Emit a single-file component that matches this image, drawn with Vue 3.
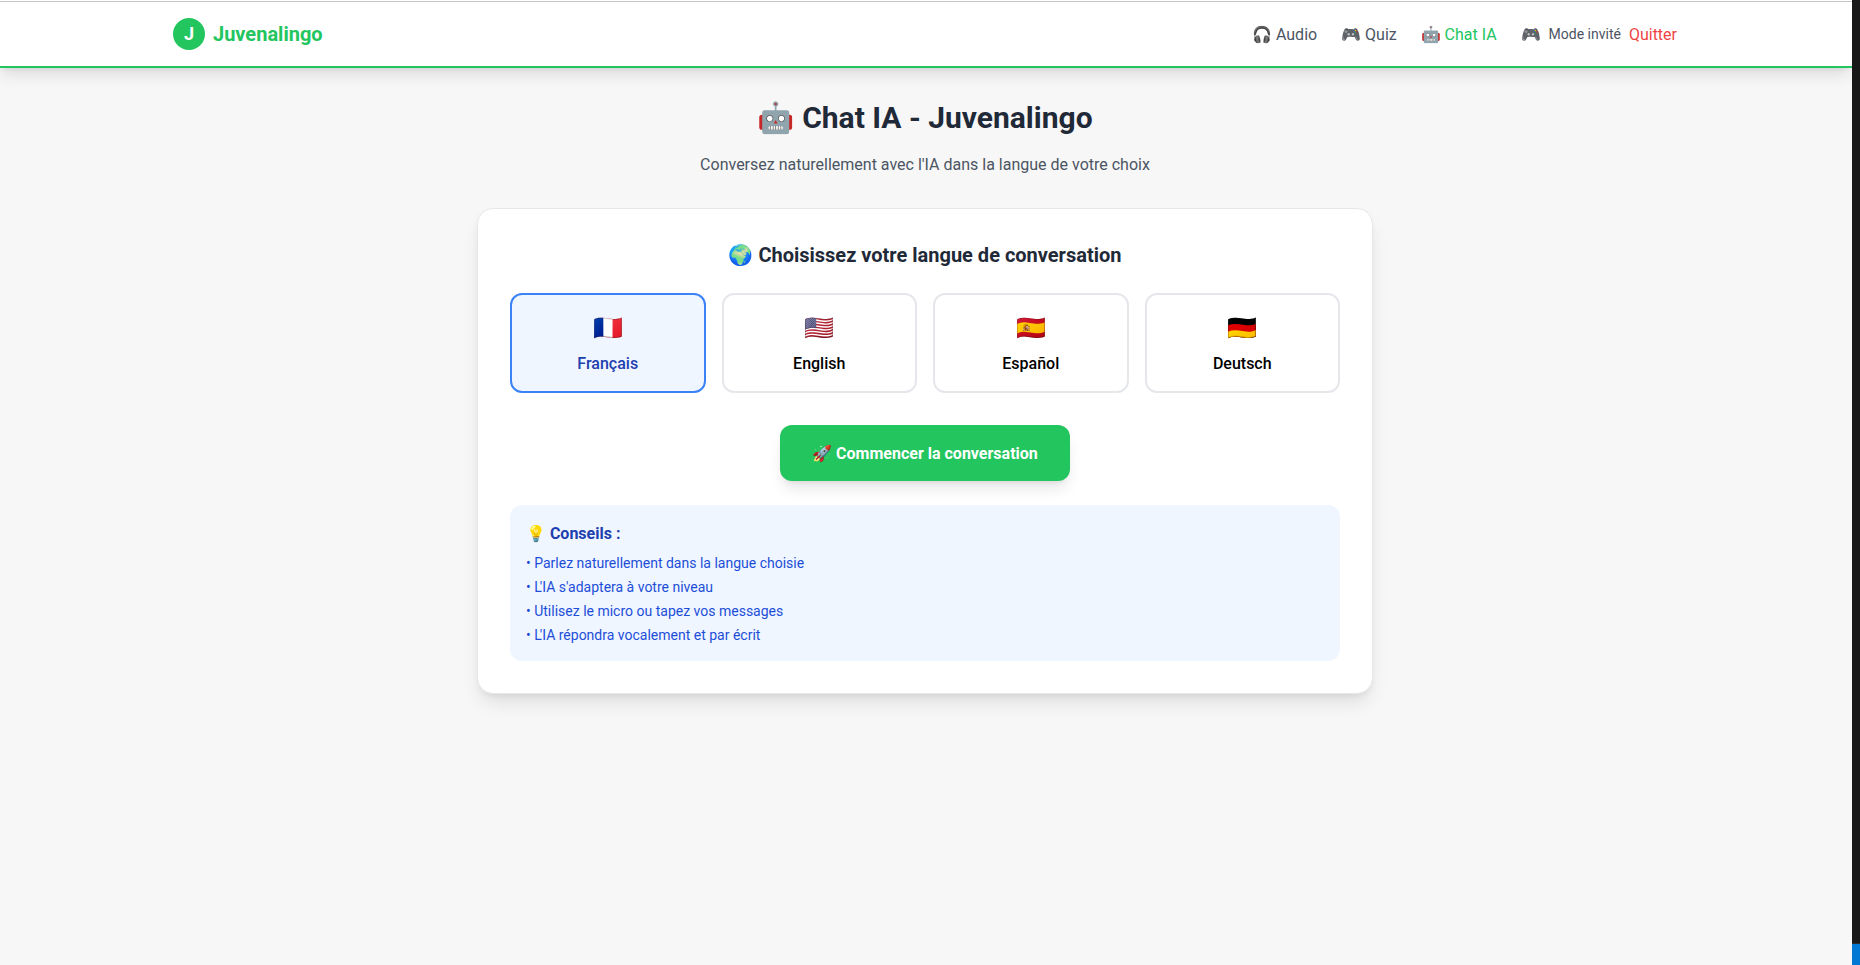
<script setup>
import { ref } from 'vue'

const selected = ref('fr')
const languages = [
  { code: 'fr', flag: '🇫🇷', name: 'Français' },
  { code: 'en', flag: '🇺🇸', name: 'English' },
  { code: 'es', flag: '🇪🇸', name: 'Español' },
  { code: 'de', flag: '🇩🇪', name: 'Deutsch' },
]
const links = [
  { icon: '🎧', label: 'Audio' },
  { icon: '🎮', label: 'Quiz' },
  { icon: '🤖', label: 'Chat IA', active: true },
]
const tips = [
  { lead: 'P', rest: 'arlez naturellement dans la langue choisie' },
  { lead: 'L', rest: "'IA s'adaptera à votre niveau", tight: true },
  { lead: 'U', rest: 'tilisez le micro ou tapez vos messages' },
  { lead: 'L', rest: "'IA répondra vocalement et par écrit", tight: true },
]
</script>

<template>
  <div class="window">
    <div class="view">
      <div class="topline"></div>
      <div class="page">
        <header class="header">
          <div class="bar">
            <div class="brand">
              <span class="logo">J</span>
              <span class="brand-name">Juvenalingo</span>
            </div>
            <nav class="nav">
              <a v-for="link in links" :key="link.label" :class="['link', { active: link.active }]"><span class="icon">{{ link.icon }}</span> {{ link.label }}</a>
              <div class="guest">
                <span class="link guest-icon">🎮</span>
                <span class="mode">Mode invité</span>
                <a class="link quit">Quitter</a>
              </div>
            </nav>
          </div>
        </header>
        <main class="main">
          <h1 class="title">🤖 Chat IA - Juvenalingo</h1>
          <p class="subtitle">Conversez naturellement avec l'IA dans la langue de votre choix</p>
          <section class="card">
            <h2 class="heading">🌍 Choisissez votre langue de conversation</h2>
            <div class="grid">
              <button
                v-for="l in languages"
                :key="l.code"
                :class="['lang', { selected: selected === l.code }]"
                @click="selected = l.code"
              >
                <span class="flag">{{ l.flag }}</span>
                <span class="name">{{ l.name }}</span>
              </button>
            </div>
            <button class="start">🚀 Commencer la conversation</button>
            <div class="tips">
              <h3 class="tips-title">💡 Conseils :</h3>
              <ul class="list">
                <li v-for="t in tips" :key="t.rest">• <span :class="{ tight: t.tight }">{{ t.lead }}</span>{{ t.rest }}</li>
              </ul>
            </div>
          </section>
        </main>
      </div>
    </div>
    <aside class="edge">
      <div class="edge-status"></div>
    </aside>
  </div>
</template>

<style>
body {
  margin: 0;
  overflow: hidden;
}
</style>

<style scoped>
.window {
  display: flex;
  height: 965px;
  font-family: Roboto, 'Noto Color Emoji', sans-serif;
  font-size: 16px;
  line-height: 24px;
  color: #000;
}
.window * {
  box-sizing: border-box;
}
.view {
  width: 1852px;
  flex: none;
  overflow: hidden;
  background: #f7f7f7;
}
.topline {
  height: 2px;
  background: #fff;
  border-bottom: 1px solid #c7c7c7;
}
.page {
  width: 1854px;
  margin-left: -2px;
}
.header {
  background: #fff;
  border-bottom: 2px solid #22c55e;
  box-shadow: 0 10px 15px -3px rgba(0, 0, 0, 0.1), 0 4px 6px -4px rgba(0, 0, 0, 0.1);
}
.bar {
  max-width: 1536px;
  height: 64px;
  margin: 0 auto;
  padding: 0 16px;
  display: flex;
  align-items: center;
  justify-content: space-between;
}
.brand {
  display: flex;
  align-items: center;
  gap: 8px;
}
.logo {
  width: 32px;
  height: 32px;
  border-radius: 50%;
  background: #22c55e;
  color: #fff;
  font-size: 18px;
  line-height: 32px;
  font-weight: 700;
  text-align: center;
}
.brand-name {
  color: #22c55e;
  font-size: 20px;
  line-height: 28px;
  font-weight: 700;
}
.nav {
  display: flex;
  align-items: center;
  gap: 24px;
  color: #4b5563;
}
.link {
  padding-top: 2px;
}
.active {
  color: #22c55e;
}
.active .icon,
.guest-icon {
  margin-left: 0.5px;
  margin-right: -0.5px;
}
.guest {
  display: flex;
  align-items: center;
  gap: 8px;
}
.mode {
  font-size: 14px;
  line-height: 20px;
}
.quit {
  color: #ef4444;
}
.main {
  width: 896px;
  margin: 0 auto;
  padding: 32px 0;
}
.title {
  margin: 0 0 16px;
  font-size: 30px;
  line-height: 36px;
  font-weight: 700;
  color: #1f2937;
  text-align: center;
}
.subtitle {
  margin: 0 0 31px;
  padding-top: 1px;
  color: #4b5563;
  text-align: center;
}
.card {
  padding: 32px;
  background: #fff;
  border: 1px solid #e5e7eb;
  border-radius: 16px;
  box-shadow: 0 12px 20px -4px rgba(0, 0, 0, 0.1), 0 4px 8px -4px rgba(0, 0, 0, 0.1);
}
.heading {
  margin: 0 0 24px;
  font-size: 20px;
  line-height: 28px;
  font-weight: 700;
  color: #1f2937;
  text-align: center;
}
.grid {
  display: grid;
  grid-template-columns: repeat(4, 1fr);
  gap: 16px;
  margin-bottom: 32px;
}
.lang {
  padding: 17px 16px 15px;
  border: 2px solid #e5e7eb;
  border-radius: 12px;
  background: #fff;
  color: #000;
  font: inherit;
}
.selected {
  border-color: #3b82f6;
  background: #eff6ff;
  color: #1e40af;
}
.flag {
  display: block;
  padding-left: 0.8px;
  font-size: 24px;
  line-height: 32px;
  margin-bottom: 8px;
}
.name {
  display: block;
  font-weight: 500;
}
.start {
  display: block;
  margin: 0 auto 24px;
  padding: 17px 32px 15px;
  border: 0;
  border-radius: 12px;
  background: #22c55e;
  color: #fff;
  font: inherit;
  font-weight: 700;
  box-shadow: 0 10px 15px -3px rgba(0, 0, 0, 0.1), 0 4px 6px -4px rgba(0, 0, 0, 0.1);
}
.tips {
  padding: 17px 16px 16px;
  border-radius: 12px;
  background: #eff6ff;
}
.tips-title {
  margin: 0 0 7px;
  font-size: 16px;
  font-weight: 700;
  color: #1e40af;
}
.list {
  margin: 0;
  padding: 0;
  list-style: none;
  display: grid;
  gap: 4px;
  font-size: 14px;
  line-height: 20px;
  color: #1d4ed8;
}
.tight {
  letter-spacing: -2px;
}
.edge {
  width: 8px;
  flex: none;
  display: flex;
  flex-direction: column;
  justify-content: flex-end;
  background: #181818;
}
.edge-status {
  height: 22px;
  border-top: 1px solid #2b2b2b;
  background: #0078d4;
}
</style>
